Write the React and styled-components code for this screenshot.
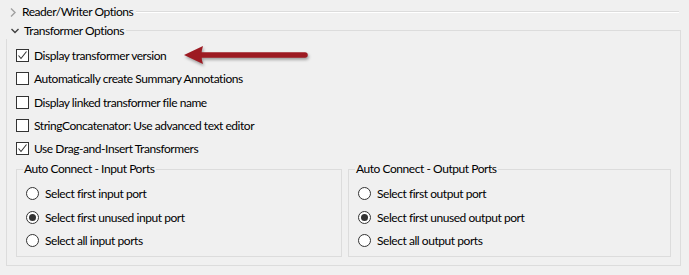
import React from "react";
import styled, { createGlobalStyle } from "styled-components";

const Global = createGlobalStyle`
  html, body { margin: 0; padding: 0; background: #f0f0f0; }
  body { font-family: Lato, "Noto Sans", sans-serif; font-size: 12px; letter-spacing: -0.45px; color: #000; }
`;

const Page = styled.div`
  position: relative;
  width: 689px;
  height: 275px;
  padding-top: 4px;
  box-sizing: border-box;
  overflow: hidden;
`;

const Header = styled.div`
  display: flex;
  align-items: center;
  height: 16px;
  margin: 0 8px 0 ${(p) => p.$indent || 0}px;
  padding: 0 2px 0 0;
  background: #f0f0f0;
`;

const Chevron = styled.span`
  display: inline-flex;
  width: 14px;
  justify-content: center;
  margin-right: 2px;
`;

const Title = styled.span`
  white-space: nowrap;
  line-height: 16px;
`;

const Rule = styled.div`
  flex: 1;
  height: 0;
  margin-left: 3px;
  border-top: 1px solid #dcdcdc;
  border-bottom: 1px solid #ffffff;
`;

const Section = styled.div`
  margin: 10px 8px 0 6px;
  border: 1px solid #dcdcdc;
  padding: 0 9px 8px 9px;
`;

const SectionHead = styled.div`
  display: flex;
  align-items: center;
  width: max-content;
  height: 16px;
  margin: -8px 0 0 -10px;
  padding: 0 2px 0 2px;
  background: #f0f0f0;
`;

const CheckList = styled.div`
  display: flex;
  flex-direction: column;
  margin-top: 5px;
  margin-bottom: 1px;
`;

const OptionRow = styled.label`
  display: flex;
  align-items: center;
  height: 23.25px;
  white-space: nowrap;
`;

const Box = styled.span`
  width: 11px;
  height: 11px;
  border: 1px solid #333;
  background: #fff;
  display: inline-flex;
  align-items: center;
  justify-content: center;
  margin-right: 5px;
  flex: none;
`;

const Radio = styled.span`
  width: 11px;
  height: 11px;
  border: 1px solid #333;
  border-radius: 50%;
  background: #fff;
  display: inline-flex;
  align-items: center;
  justify-content: center;
  margin-right: 6px;
  flex: none;
`;

const Dot = styled.span`
  width: 7px;
  height: 7px;
  border-radius: 50%;
  background: #333;
`;

const Groups = styled.div`
  display: grid;
  grid-template-columns: 326px 323px;
  column-gap: 6px;
`;

const Group = styled.fieldset`
  margin: 0;
  min-width: 0;
  border: 1px solid #dcdcdc;
  padding: 5px 8px 4px 9px;
`;

const Legend = styled.legend`
  padding: 0 1px;
  margin-left: -3px;
  height: 16px;
  line-height: 16px;
`;

const Arrow = styled.svg`
  position: absolute;
  left: 178px;
  top: 40px;
  overflow: visible;
  filter: drop-shadow(1px 2px 1.5px rgba(0, 0, 0, 0.35));
`;

const Check = () => (
  <svg width="11" height="11" viewBox="0 0 11 11">
    <polyline points="1.5,5.5 4,8.5 9.5,1.5" fill="none" stroke="#333" strokeWidth="1.1" />
  </svg>
);

const CheckOption = ({ checked, children }) => (
  <OptionRow>
    <Box>{checked && <Check />}</Box>
    {children}
  </OptionRow>
);

const RadioOption = ({ checked, children }) => (
  <OptionRow>
    <Radio>{checked && <Dot />}</Radio>
    {children}
  </OptionRow>
);

const ChevronRight = () => (
  <svg width="6" height="9" viewBox="0 0 6 9">
    <polyline points="1,0.5 5,4.5 1,8.5" fill="none" stroke="#a0a0a0" strokeWidth="1.4" />
  </svg>
);

const ChevronDown = () => (
  <svg width="8" height="6" viewBox="0 0 8 6">
    <polyline points="0.5,1 4,4.5 7.5,1" fill="none" stroke="#404040" strokeWidth="1.4" />
  </svg>
);

export default function App() {
  return (
    <Page>
      <Global />
      <Header $indent={6}>
        <Chevron>
          <ChevronRight />
        </Chevron>
        <Title>Reader/Writer Options</Title>
        <Rule />
      </Header>
      <Section>
        <SectionHead>
          <Chevron>
            <ChevronDown />
          </Chevron>
          <Title>Transformer Options</Title>
        </SectionHead>
        <CheckList>
          <CheckOption checked>Display transformer version</CheckOption>
          <CheckOption>Automatically create Summary Annotations</CheckOption>
          <CheckOption>Display linked transformer file name</CheckOption>
          <CheckOption>StringConcatenator: Use advanced text editor</CheckOption>
          <CheckOption checked>Use Drag-and-Insert Transformers</CheckOption>
        </CheckList>
        <Groups>
          <Group>
            <Legend>Auto Connect - Input Ports</Legend>
            <RadioOption>Select first input port</RadioOption>
            <RadioOption checked>Select first unused input port</RadioOption>
            <RadioOption>Select all input ports</RadioOption>
          </Group>
          <Group>
            <Legend>Auto Connect - Output Ports</Legend>
            <RadioOption>Select first output port</RadioOption>
            <RadioOption checked>Select first unused output port</RadioOption>
            <RadioOption>Select all output ports</RadioOption>
          </Group>
        </Groups>
      </Section>
      <Arrow width="134" height="30" viewBox="0 0 134 30">
        <line x1="22" y1="15" x2="127" y2="15" stroke="#9d1a22" strokeWidth="5.5" strokeLinecap="round" />
        <path d="M6,15 L25,6 Q22,15 25,24 Z" fill="#9d1a22" />
      </Arrow>
    </Page>
  );
}
